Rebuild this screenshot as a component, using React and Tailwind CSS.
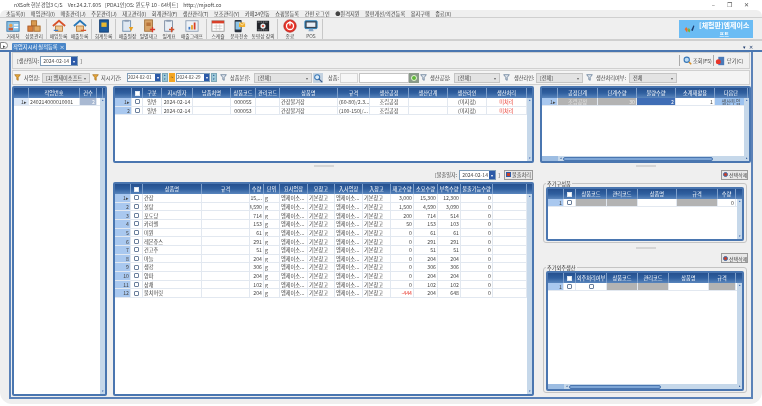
import React from "react";

const menus = ["초등록(I)", "매입관리(I)", "매출관리(J)", "주문관리(J)", "재고관리(I)", "회계관리(F)", "생산관리(T)", "보조관리(Y)", "카페24연동", "쇼핑몰등록", "간편 로그인", "●원격지원", "불편개선/의견등록", "용지구매", "종료(X)"];

const Ico = ({ children }) => (
  <svg viewBox="0 0 16 16" className="w-[14px] h-[14px]">{children}</svg>
);

const icons = {
  client: <Ico><rect x="1" y="3" width="14" height="11" fill="#8cc4e8" stroke="#3a78a8" /><circle cx="5.5" cy="7.5" r="2" fill="#e8a050" /><rect x="3" y="10" width="5" height="3" fill="#c85a3a" /><rect x="9" y="6" width="5" height="1.5" fill="#fff" /><rect x="9" y="9" width="5" height="1.5" fill="#fff" /></Ico>,
  goods: <Ico><rect x="5" y="2" width="6" height="6" fill="#d89a50" stroke="#a86a2a" /><rect x="1" y="8" width="6" height="6" fill="#d8803a" stroke="#a85a2a" /><rect x="8" y="8" width="7" height="6" fill="#e0a860" stroke="#a86a2a" /></Ico>,
  buy: <Ico><path d="M1 8 8 2l7 6" fill="none" stroke="#d8522a" strokeWidth="2" /><rect x="4" y="8" width="8" height="6" fill="#f0c890" stroke="#b87a3a" /><path d="M2 13h5" stroke="#3a7ac8" strokeWidth="1.5" /></Ico>,
  sell: <Ico><path d="M1 8 8 2l7 6" fill="none" stroke="#2a78b8" strokeWidth="2" /><rect x="4" y="8" width="8" height="6" fill="#f0c890" stroke="#b87a3a" /><path d="M9 13h6" stroke="#d8522a" strokeWidth="1.5" /></Ico>,
  book: <Ico><rect x="3" y="1" width="10" height="14" fill="#1c5a9c" stroke="#123c70" /><rect x="5" y="4" width="6" height="5" fill="#e8b830" /></Ico>,
  ledger: <Ico><rect x="2" y="2" width="9" height="12" fill="#dfe8f2" stroke="#6a8aaa" /><rect x="4" y="1" width="5" height="2" fill="#8a9ab0" /><path d="M9 9h5l-2.500 5z" fill="#e8a020" /></Ico>,
  stock: <Ico><rect x="3" y="1" width="9" height="13" fill="#d8a468" stroke="#a0703a" /><rect x="5" y="4" width="5" height="4" fill="#b8743a" /><path d="M9 12h6M12 9v6" stroke="#d83a2a" strokeWidth="1.500" /></Ico>,
  daily: <Ico><rect x="3" y="2" width="9" height="12" fill="#e8eef5" stroke="#7a8aa0" /><rect x="5" y="1" width="5" height="2" fill="#8a9ab0" /><path d="M8 12h6M11 9v6" stroke="#d8502a" strokeWidth="1.500" /></Ico>,
  graph: <Ico><rect x="1" y="2" width="14" height="12" fill="#eef2f7" stroke="#8a9ab0" /><rect x="4" y="9" width="2" height="3" fill="#3a78c8" /><rect x="7" y="7" width="2" height="5" fill="#e8a020" /><rect x="10" y="4" width="2" height="8" fill="#d8402a" /></Ico>,
  schedule: <Ico><rect x="1" y="2" width="14" height="12" fill="#fff" stroke="#9a9a9a" /><rect x="1" y="2" width="14" height="3" fill="#d8402a" /><path d="M3 8h10M3 11h10M6 6v7M10 6v7" stroke="#c0c0c0" strokeWidth=".7" /></Ico>,
  sms: <Ico><rect x="3" y="1" width="8" height="14" rx="1" fill="#2c3440" /><rect x="4" y="3" width="6" height="9" fill="#8cc4e8" /><path d="M8 4h7v5H8z" fill="#f0b030" /><path d="M8 4l3.500 3L15 4" fill="none" stroke="#fff" strokeWidth=".7" /></Ico>,
  video: <Ico><rect x="1" y="2" width="14" height="12" fill="#23252a" /><circle cx="8" cy="8" r="3" fill="#e8e8e8" /><circle cx="8" cy="8" r="1.200" fill="#d8402a" /><path d="M2 3.500h12M2 12.500h12" stroke="#fff" strokeWidth=".7" strokeDasharray="1 1" /></Ico>,
  power: <Ico><circle cx="8" cy="8" r="7" fill="#e8352a" stroke="#b8201a" /><circle cx="8" cy="8" r="4" fill="none" stroke="#fff" strokeWidth="1.500" /><path d="M8 2.500v5" stroke="#fff" strokeWidth="1.500" /></Ico>,
  pos: <Ico><rect x="1" y="2" width="14" height="9" rx="1" fill="#3a4654" stroke="#2a8ac8" /><rect x="3" y="4" width="10" height="5" fill="#e8eef5" /><path d="M5 14h6l-1-3H6z" fill="#88a8c8" /></Ico>,
};

const tools = [
  [["거래처", "client", "w-[20px]"], ["상품관리", "goods", "w-[22px]"]],
  [["매입등록", "buy", "w-[21px]"], ["매출등록", "sell", "w-[21px]"]],
  [["회계등록", "book", "w-[21px]"]],
  [["매출원장", "ledger", "w-[21px]"], ["일별재고", "stock", "w-[21px]"], ["일계표", "daily", "w-[20px]"], ["매출그래프", "graph", "w-[26px]"]],
  [["스케쥴", "schedule", "w-[20px]"], ["문자전송", "sms", "w-[22px]"], ["동영상 강의", "video", "w-[26px]"]],
  [["종료", "power", "w-[22px]"], ["POS", "pos", "w-[20px]"]],
];

const FilterIcon = ({ gold }) => (
  <svg viewBox="0 0 10 10" className="w-[7px] h-[7px] shrink-0">
    <path d="M1 1h8L6 5v4L4 8V5z" fill={gold ? "#e8a83a" : "#dfe6ee"} stroke={gold ? "#a8701a" : "#56708c"} strokeWidth="1" />
  </svg>
);

const Select = ({ label, w }) => (
  <div className={`${w} h-[10px] flex items-center justify-between px-[3px] bg-[#e3e3e3] border border-[#c4c4c4] shrink-0`}>
    <span>{label}</span>
    <span className="text-[4px] text-[#666]">▾</span>
  </div>
);

const DateBox = ({ w = "w-[38px]" }) => (
  <div className={`${w} h-[10px] flex items-center justify-between bg-white border border-[#7f9db9] shrink-0 text-[5px]`}>
    <span className="pl-[2px]">2024-02-14</span>
    <span className="w-[6px] h-[8px] bg-[#2c5aa8] text-white text-[4px] leading-[8px] text-center">▾</span>
  </div>
);

const RangeDate = ({ text }) => (
  <div className="ml-[1px] w-[34px] h-[9px] flex items-center justify-between bg-white border border-[#7f9db9] shrink-0 text-[4.6px]">
    <span>{text}</span>
    <span className="w-[5px] h-[7px] bg-[#2c5aa8] text-white text-[4px] leading-[7px] text-center shrink-0">▾</span>
  </div>
);

const Spin = () => (
  <div className="ml-[1px] w-[6px] h-[9px] flex flex-col justify-between shrink-0 bg-[#9cc8d8] border border-[#7fa8b8]">
    <span className="h-[3px] text-[3px] leading-[3px] text-center text-[#1c4a8c]">▴</span>
    <span className="h-[3px] text-[3px] leading-[3px] text-center text-[#1c4a8c]">▾</span>
  </div>
);

const DeleteBtn = () => (
  <div className="w-[27px] h-[10px] flex items-center gap-[1px] pl-[1px] bg-[#e8e8e8] border border-[#9a9a9a] text-[5px] whitespace-nowrap">
    <span className="w-[5px] h-[5px] rounded-full bg-[#c8402a] border border-[#3a6aa8] shrink-0" />
    <span>선택삭제</span>
  </div>
);

const Check = () => (
  <span className="block w-[5px] h-[5px] bg-white border border-[#6a7f9c] rounded-[1px]" />
);

const HeadCheck = () => (
  <span className="block w-[5px] h-[5px] bg-white border border-[#dfe8f2]" />
);

// 그리드 공통: 헤더 + 행 + 스크롤바
const Grid = ({ cols, rows, className, rowH = "h-[8.67px]", hscroll }) => (
  <div className={`relative flex flex-col bg-white border-2 border-[#4a76b0] rounded-[2px] overflow-hidden ${className}`}>
    <div className="flex h-[10px] shrink-0 bg-gradient-to-b from-[#25508f] via-[#2f5f9f] to-[#5a86bd] text-white">
      {cols.map((c, i) => (
        <div key={i} className={`${c.w} shrink-0 flex items-center justify-center border-r border-[#7d9fcb] overflow-hidden whitespace-nowrap`}>
          {c.head === "check" ? <HeadCheck /> : c.label}
        </div>
      ))}
    </div>
    {rows.map((r, ri) => (
      <div key={ri} className={`flex ${rowH} shrink-0 border-b border-[#e2e8f0]`}>
        {cols.map((c, i) => {
          const cell = r[i];
          const val = cell && cell.v !== undefined ? cell.v : cell;
          return (
            <div key={i} className={`${c.w} shrink-0 flex items-center px-[1px] overflow-hidden whitespace-nowrap border-r border-[#e2e8f0] ${c.cell || ""} ${(cell && cell.c) || ""}`}>
              {val === "check" ? <Check /> : val}
            </div>
          );
        })}
      </div>
    ))}
    <div className="absolute top-[10px] bottom-0 right-0 w-[5px] bg-[#c6d8ea] flex flex-col justify-between items-center text-[3px] text-[#2c5aa8] leading-[5px]">
      <span>▴</span>
      {!hscroll && <span>▾</span>}
    </div>
    {hscroll && (
      <div className="absolute bottom-0 left-0 right-0 h-[5px] bg-[#c6d8ea] flex items-center">
        <div className="w-[16px] h-full bg-[#9dbde2] shrink-0" />
        <span className="text-[3px] text-[#1c4a8c] w-[5px] text-center">◂</span>
        <div className={`${hscroll} h-[4px] bg-[#7ea6d6] border border-[#4a76b0] rounded-[2px]`} />
        <span className="ml-auto mr-[1px] text-[3px] text-[#1c4a8c]">▸</span>
      </div>
    )}
  </div>
);

const rowHead = "w-[16px] justify-end bg-[#a9c8ef] !px-[1px]";
const center = "justify-center";
const right = "justify-end";
const gray = "bg-[#b3b3b3] text-[#e8e8e8]";

const leftCols = [
  { w: "w-[15px]", label: "", cell: "w-[15px] justify-end bg-[#dbe7f7]" },
  { w: "w-[51px]", label: "작업번호" },
  { w: "w-[17px]", label: "건수", cell: "justify-end bg-[#a9b9d2] text-white" },
  { w: "w-[6px]", label: "" },
];

const topCols = [
  { w: "w-[17px]", label: "", cell: rowHead },
  { w: "w-[11px]", head: "check", cell: center },
  { w: "w-[19px]", label: "구분", cell: center },
  { w: "w-[31px]", label: "지시일자", cell: center },
  { w: "w-[38px]", label: "납품처명" },
  { w: "w-[25px]", label: "상품코드", cell: center },
  { w: "w-[24px]", label: "관리코드" },
  { w: "w-[58px]", label: "상품명" },
  { w: "w-[32px]", label: "규격" },
  { w: "w-[39px]", label: "생산공정", cell: center },
  { w: "w-[39px]", label: "생산단계" },
  { w: "w-[39px]", label: "생산라인", cell: center },
  { w: "w-[40px]", label: "생산처리", cell: "justify-center text-[#e8352a]" },
  { w: "w-[6px]", label: "" },
];

const topRows = [
  ["1▸", "check", "일반", "2024-02-14", "", "000055", "", "간장불겨장", "(60-80)/2.3...", "조립공정", "", "(미지정)", "미처리", ""],
  ["2", "check", "일반", "2024-02-14", "", "000053", "", "간장불겨장", "(100-150)/...", "조립공정", "", "(미지정)", "미처리", ""],
];

const bottomCols = [
  { w: "w-[16px]", label: "", cell: rowHead },
  { w: "w-[12px]", head: "check", cell: center },
  { w: "w-[59px]", label: "상품명" },
  { w: "w-[48px]", label: "규격" },
  { w: "w-[14px]", label: "수량", cell: right },
  { w: "w-[16px]", label: "단위" },
  { w: "w-[28px]", label: "요사업장" },
  { w: "w-[27px]", label: "요창고" },
  { w: "w-[28px]", label: "入사업장" },
  { w: "w-[28px]", label: "入창고" },
  { w: "w-[23px]", label: "재고수량", cell: right },
  { w: "w-[24px]", label: "소요수량", cell: right },
  { w: "w-[23px]", label: "부족수량", cell: right },
  { w: "w-[32px]", label: "불출가능수량", cell: right },
  { w: "w-[34px]", label: "" },
];

const items = [
  ["간장", "15,...", "3,000", "15,300", "12,300"],
  ["설탕", "4,590", "1,500", "4,590", "3,090"],
  ["포도당", "714", "200", "714", "514"],
  ["카라멜", "153", "50", "153", "103"],
  ["미원", "61", "0", "61", "61"],
  ["레몬쥬스", "291", "0", "291", "291"],
  ["건고추", "51", "0", "51", "51"],
  ["마늘", "204", "0", "204", "204"],
  ["생강", "306", "0", "306", "306"],
  ["양파", "204", "0", "204", "204"],
  ["상채", "102", "0", "102", "102"],
  ["불치머릿", "204", { v: "-444", c: "text-[#e8352a]" }, "204", "648"],
];

const bottomRows = items.map((it, i) => [
  i === 0 ? "1▸" : String(i + 1), "check", it[0], "", it[1], "g", "엠제이소...", "기본창고", "엠제이소...", "기본창고", it[2], it[3], it[4], "0", "",
]);

const stepCols = [
  { w: "w-[16px]", label: "", cell: rowHead },
  { w: "w-[40px]", label: "공정단계" },
  { w: "w-[39px]", label: "단계수량" },
  { w: "w-[39px]", label: "불량수량" },
  { w: "w-[39px]", label: "소계재활용" },
  { w: "w-[33px]", label: "다음단" },
];

const stepRows = [[
  "1▸",
  { v: <span className="w-full text-center">조립공정</span>, c: gray },
  { v: <span className="w-full text-right">30</span>, c: gray },
  { v: <span className="w-full text-right">2</span>, c: "bg-[#3f6db5] text-white" },
  { v: <span className="w-full text-right">1</span>, c: "bg-white" },
  { v: "생산투입", c: "bg-[#9dc3f0] justify-center" },
]];

const partCols = [
  { w: "w-[16px]", label: "", cell: rowHead },
  { w: "w-[12px]", head: "check", cell: center },
  { w: "w-[31px]", label: "상품코드" },
  { w: "w-[31px]", label: "관리코드" },
  { w: "w-[39px]", label: "상품명" },
  { w: "w-[41px]", label: "규격" },
  { w: "w-[18px]", label: "수량", cell: right },
];

const outCols = [
  { w: "w-[16px]", label: "", cell: rowHead },
  { w: "w-[12px]", head: "check", cell: center },
  { w: "w-[31px]", label: "외주처리여부", cell: center },
  { w: "w-[31px]", label: "상품코드" },
  { w: "w-[31px]", label: "관리코드" },
  { w: "w-[40px]", label: "상품명" },
  { w: "w-[27px]", label: "규격" },
];

const Sash = () => <div className="w-[20px] h-[2px] bg-[#d5d5d5] mx-auto shrink-0" />;

const FieldSet = ({ legend, className, children }) => (
  <div className={`relative border border-[#c4c4c4] rounded-[3px] pt-[3px] px-[2px] pb-[1px] ${className}`}>
    <span className="absolute -top-[3px] left-[2px] px-[1px] bg-[#efefef] leading-[6px] text-[#333]">{legend}</span>
    {children}
  </div>
);

export default function App() {
  return (
    <div className="w-[762px] h-[406px] overflow-hidden bg-white text-[5.2px] leading-none text-[#444] blur-[0.25px] [font-family:'Noto_Sans_CJK_KR','Liberation_Sans',sans-serif]">
      {/* 타이틀바 */}
      <div className="h-[10px] flex items-center pl-[14px] pr-[13px] gap-[3px]">
        <span>nXSoft 현분경영3 C/S</span>
        <span className="ml-[2px]">Ver.24.2.7.605</span>
        <span className="ml-[1px]">[PDA1인]OS: 윈도우 10 - 64비트]</span>
        <span className="ml-[2px]">http://mjsoft.co</span>
        <div className="ml-auto flex gap-[12px] text-[6px] text-[#555]">
          <span>–</span><span>❐</span><span>✕</span>
        </div>
      </div>

      <div className="h-[394px] bg-[#efefef] rounded-t-[6px] rounded-b-[12px] overflow-hidden flex flex-col">
        {/* 메뉴 */}
        <div className="h-[7px] shrink-0 flex items-center pl-[6px] gap-[5.5px] whitespace-nowrap">
          {menus.map((m) => <span key={m}>{m}</span>)}
        </div>

        {/* 툴바 */}
        <div className="h-[24px] shrink-0 flex items-center pl-[3px] pr-[9px] border-t border-b-2 border-t-[#cfcfcf] border-b-[#cfcfcf]">
          {tools.map((group, gi) => (
            <div key={gi} className="flex items-center h-[20px] border-r border-[#c8c8c8] pr-[1px] mr-[1px]">
              {group.map(([label, icon, w]) => (
                <div key={label} className={`${w} flex flex-col items-center gap-[1px] whitespace-nowrap`}>
                  {icons[icon]}
                  <span className="text-[4.8px]">{label}</span>
                </div>
              ))}
            </div>
          ))}
          <div className="ml-auto w-[74px] h-[18px] bg-[#6bbcf4] flex items-center gap-[3px] pl-[4px] text-white">
            <svg viewBox="0 0 16 16" className="w-[13px] h-[13px] shrink-0">
              <path d="M2 9l2-3 2 3-1 4z" fill="#e8702a" />
              <path d="M6 11l1-4 2 3-1 3z" fill="#6ab83a" />
              <path d="M10 10l3-6 1 1-2 6z" fill="#1c3a6c" />
            </svg>
            <div className="flex flex-col items-center gap-[2px] text-[7px] font-bold [font-family:'Noto_Sans_CJK_KR',serif] whitespace-nowrap">
              <span>[체험판]엠제이소</span>
              <span className="text-[5px]">프트</span>
            </div>
          </div>
        </div>

        {/* 탭 */}
        <div className="h-[11px] shrink-0 flex items-end border-b-2 border-[#4a76b0]">
          <span className="w-[8px] h-[7px] mb-[1px] rounded-r-full bg-white border border-[#888] text-[5px] leading-[5px] text-center">▸</span>
          <div className="ml-[4px] w-[54px] h-[7px] bg-[#4a86c8] text-white flex items-center justify-center gap-[2px] rounded-t-[1px] whitespace-nowrap">
            <span>작업지시서 실적등록</span><span>×</span>
          </div>
          <div className="ml-auto flex gap-[3px] pr-[9px] pb-[1px] text-[#1c3a6c] text-[5px]">
            <span>▾</span><span>✕</span>
          </div>
        </div>

        {/* 본문 */}
        <div className="flex-1 min-h-0 mx-[9px] mb-[5px] border-x-2 border-b-2 border-[#5b82b8] flex flex-col">
          <div className="h-[17px] shrink-0 flex items-center pl-[4px] pr-[6px] mx-[1px] bg-[#f0f0f0] border border-[#d0d0d0]">
            <span className="mr-[1px]">[생산일자:</span>
            <DateBox />
            <span className="ml-[2px]">]</span>
            <div className="ml-auto flex items-center h-[11px] whitespace-nowrap">
              <div className="flex items-center gap-[1px] w-[34px] border-l border-[#aaa] pl-[3px] h-full">
                <svg viewBox="0 0 12 12" className="w-[9px] h-[9px] shrink-0"><circle cx="5" cy="5" r="3.500" fill="#bcdcf4" stroke="#3a78b8" strokeWidth="1.500" /><path d="M8 8l3 3" stroke="#d8902a" strokeWidth="2" /></svg>
                <span>조회(F5)</span>
              </div>
              <div className="flex items-center gap-[2px] w-[30px] border-l border-[#aaa] pl-[1px] h-full">
                <svg viewBox="0 0 12 12" className="w-[10px] h-[10px] shrink-0"><rect x="4" y="1" width="7" height="10" fill="#4a7ab8" /><circle cx="4" cy="7" r="3" fill="#e8352a" /></svg>
                <span>닫기(C)</span>
              </div>
            </div>
          </div>

          {/* 조회 조건 */}
          <div className="h-[15px] mt-[1px] shrink-0 flex items-center pl-[1px] mx-[1px] bg-[#f4f4f4] border border-[#d0d0d0] whitespace-nowrap">
            <FilterIcon gold />
            <span className="ml-[3px] w-[15px]">사업장:</span>
            <div className="ml-[3px]"><Select label="[1] 엠제이소프트" w="w-[48px]" /></div>
            <div className="ml-[2px]"><FilterIcon gold /></div>
            <span className="ml-[2px] w-[25px]">지시기간:</span>
            <RangeDate text="2024-02-01" />
            <Spin />
            <span className="ml-[1px] w-[6px] h-[9px] bg-[#f5a623] text-center leading-[8px] text-[#333]">~</span>
            <RangeDate text="2024-02-29" />
            <Spin />
            <div className="ml-[3px]"><FilterIcon /></div>
            <span className="ml-[3px] w-[24px]">상품분류:</span>
            <Select label="[전체]" w="w-[58px]" />
            <svg viewBox="0 0 12 12" className="ml-[1px] w-[10px] h-[10px] shrink-0"><rect width="12" height="12" fill="#c4d2e0" /><circle cx="5" cy="5" r="3" fill="#dcecf8" stroke="#3a78b8" strokeWidth="1.300" /><path d="M7 7l4 4" stroke="#3a5a88" strokeWidth="1.500" /></svg>
            <span className="ml-[5px] w-[12px]">상품:</span>
            <div className="w-[18px] h-[10px] bg-[#f6f6f6] border border-[#d5d5d5]" />
            <div className="ml-[1px] w-[50px] h-[10px] bg-white border border-[#c4c4c4]" />
            <span className="w-[10px] h-[10px] bg-[#8a9a8a] flex items-center justify-center shrink-0">
              <span className="w-[6px] h-[6px] rounded-full bg-[#5fb83a] border border-[#e8f4d8]" />
            </span>
            <div className="ml-[1px]"><FilterIcon /></div>
            <span className="ml-[3px] w-[24px]">생산공정:</span>
            <Select label="[전체]" w="w-[46px]" />
            <div className="ml-[3px]"><FilterIcon /></div>
            <span className="ml-[4px] w-[22px]">생산라인:</span>
            <Select label="[전체]" w="w-[47px]" />
            <div className="ml-[3px]"><FilterIcon /></div>
            <span className="ml-[3px] w-[33px]">생산처리여부:</span>
            <Select label="전체" w="w-[48px]" />
          </div>

          {/* 세 칸 */}
          <div className="flex-1 flex gap-[6px] pl-[1px] pt-[1px] min-h-0">
            <Grid
              cols={leftCols}
              rows={[["1▸", "240214000010001", "2", ""]]}
              rowH="h-[8px]"
              className="w-[95px] h-[310px] shrink-0"
            />

            <div className="w-[421px] shrink-0 flex flex-col">
              <Grid cols={topCols} rows={topRows} className="w-[421px] h-[77px] shrink-0" />
              <div className="h-[19px] shrink-0 flex flex-col pt-[2px]">
                <Sash />
                <div className="flex-1 flex items-center justify-end gap-[2px] pr-[1px] whitespace-nowrap">
                  <span>[불출일자:</span>
                  <DateBox w="w-[37px]" />
                  <span>]</span>
                  <div className="ml-[2px] w-[29px] h-[10px] flex items-center justify-center gap-[1px] bg-[#e8e8e8] border border-[#9a9a9a]">
                    <span className="w-[5px] h-[5px] bg-[#c8402a] border border-[#2c5aa8] shrink-0" />
                    <span>불출처리</span>
                  </div>
                </div>
              </div>
              <Grid cols={bottomCols} rows={bottomRows} className="w-[421px] flex-1 min-h-0 mb-[1px]" />
            </div>

            <div className="w-[211px] shrink-0 flex flex-col">
              <Grid cols={stepCols} rows={stepRows} rowH="h-[8px]" hscroll="w-[150px]" className="w-[211px] h-[77px] shrink-0" />
              <div className="h-[20px] shrink-0 flex flex-col pt-[2px]">
                <Sash />
                <div className="flex-1 flex items-center justify-end pr-[3px] pb-[1px]"><DeleteBtn /></div>
              </div>
              <FieldSet legend="추가구성품" className="ml-[3px] mr-[4px] h-[60px] shrink-0">
                <Grid
                  cols={partCols}
                  rows={[[
                    "1", "check",
                    { v: "", c: gray }, { v: "", c: gray }, "", { v: "", c: gray }, "0",
                  ]]}
                  rowH="h-[8px]"
                  className="h-full"
                />
              </FieldSet>
              <div className="h-[24px] shrink-0 flex flex-col pt-[4px]">
                <Sash />
                <div className="flex-1 flex items-center justify-end pr-[3px]"><DeleteBtn /></div>
              </div>
              <FieldSet legend="추가외주생산" className="ml-[3px] mr-[4px] h-[126px] shrink-0">
                <Grid
                  cols={outCols}
                  rows={[[
                    "1", "check", <Check />,
                    { v: "", c: gray }, { v: "", c: gray }, "", { v: "", c: gray },
                  ]]}
                  rowH="h-[8px]"
                  hscroll="w-[92px]"
                  className="h-full"
                />
              </FieldSet>
            </div>
          </div>
        </div>
      </div>
    </div>
  );
}
